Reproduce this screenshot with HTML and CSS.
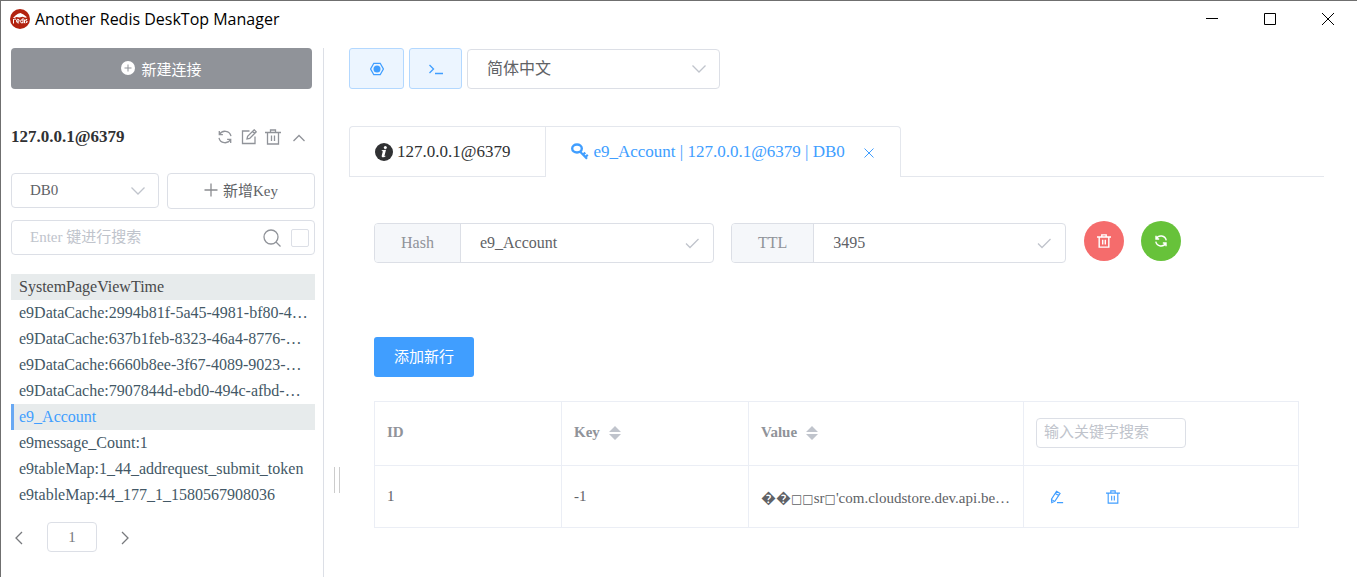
FILE: index.html
```html
<!DOCTYPE html>
<html lang="zh-CN">
<head>
<meta charset="utf-8">
<title>Another Redis DeskTop Manager</title>
<link rel="stylesheet" href="styles.css">
</head>
<body>
<svg class="sprite" aria-hidden="true">
  <symbol id="i-trash" viewBox="0 0 16 16"><path d="M0 3.500h16M5.500 3.500v-2.500h5v2.500M2.500 3.500v11.500h11v-11.500M6.500 6.500v5.500M9.500 6.500v5.500"/></symbol>
  <symbol id="i-refresh" viewBox="0 0 16 16"><path d="M2.300 2v3.700h3.600M13.700 14v-3.700h-3.600M2.500 5.500A6.200 6.200 0 0 1 14 7.200M13.500 10.500A6.200 6.200 0 0 1 2 8.800"/></symbol>
  <symbol id="i-edit" viewBox="0 0 16 16"><path d="M8.500 2h-7v12.500h12.500v-7M6 10l.6-2.700L13.200.8l2 2L8.700 9.400zM11.500 2.500l2 2"/></symbol>
  <symbol id="i-down" viewBox="0 0 16 16"><path d="M1.500 4.500 8 11l6.500-6.500"/></symbol>
  <symbol id="i-up" viewBox="0 0 16 16"><path d="M2.500 12l5.500-5.500 5.500 5.500"/></symbol>
  <symbol id="i-left" viewBox="0 0 16 16"><path d="M11 3 5 9l6 6"/></symbol>
  <symbol id="i-right" viewBox="0 0 16 16"><path d="M5 3l6 6-6 6"/></symbol>
  <symbol id="i-check" viewBox="0 0 16 16"><path d="M2 8.500 6 12.500 14.500 4"/></symbol>
  <symbol id="i-close" viewBox="0 0 16 16"><path d="M3.500 4.500l9 9M12.500 4.500l-9 9"/></symbol>
  <symbol id="i-pen" viewBox="0 0 16 16"><path d="M2 14.500 1.700 10.500 7.500 1.500l4 2.400L5.700 12.700zM6 3.900l4 2.400M1.900 11l3.500 2M8 14.500h7"/></symbol>
</svg>
<div class="window">
  <header class="titlebar">
    <svg class="logo" viewBox="0 0 20 20" aria-hidden="true">
      <circle cx="10" cy="10" r="10" fill="#b2220f"/>
      <path d="M3 9 5.500 6.500 8 4.700 10.500 4l3 1.500 3.500 2.800-1.500.5-3-1-3 .6-3-.4-2 1.100z" fill="#fff"/>
      <path d="M3.500 14.500v-4.500M3.500 11q1-1.300 2.500-.800M6.500 12.200h2.700q0-2-1.300-2-1.400.1-1.400 2t2.600 1.800M13 9v5.200M13 11q-2.500-1-2.500 1.400t2.500 1.200M14.500 10.500v3.700M17.200 10.500q-1.800-.4-1.600.7t1.600 1.300-1.600 1.400" fill="none" stroke="#fff" stroke-width="1"/>
    </svg>
    <h1 class="title">Another Redis DeskTop Manager</h1>
    <div class="window-controls">
      <button class="window-button" aria-label="最小化"><svg viewBox="0 0 12 12"><path d="M0 5.500h12"/></svg></button>
      <button class="window-button" aria-label="最大化"><svg viewBox="0 0 12 12"><path d="M.5.5h11v11H.5z"/></svg></button>
      <button class="window-button" aria-label="关闭"><svg viewBox="0 0 12 12"><path d="M0 0l12 12M12 0 0 12"/></svg></button>
    </div>
  </header>
  <div class="body">
    <aside class="sidebar">
      <button class="new-connection">
        <svg class="icon-plus-circle" viewBox="0 0 14 14" aria-hidden="true"><circle cx="7" cy="7" r="7" fill="#fff"/><path d="M7 3.500v7M3.500 7h7" stroke="#909399"/></svg>
        新建连接
      </button>
      <div class="host">
        <h2 class="host-name">127.0.0.1@6379</h2>
        <div class="host-actions">
          <button class="icon-button" aria-label="刷新"><svg class="icon"><use href="#i-refresh"/></svg></button>
          <button class="icon-button" aria-label="编辑"><svg class="icon"><use href="#i-edit"/></svg></button>
          <button class="icon-button" aria-label="删除"><svg class="icon"><use href="#i-trash"/></svg></button>
          <button class="icon-button host-toggle" aria-label="收起"><svg class="icon"><use href="#i-up"/></svg></button>
        </div>
      </div>
      <div class="db-row">
        <div class="select">
          <select class="select-box" aria-label="DB"><option>DB0</option></select>
          <svg class="icon select-arrow"><use href="#i-down"/></svg>
        </div>
        <button class="new-key"><svg class="icon-plus" viewBox="0 0 14 14"><path d="M7 .5v13M.5 7h13"/></svg>新增Key</button>
      </div>
      <div class="search">
        <input class="search-input" type="text" placeholder="Enter 键进行搜索" aria-label="搜索">
        <svg class="icon-search" viewBox="0 0 18 18"><circle cx="8" cy="8" r="7"/><path d="M13 13l4.500 4.500"/></svg>
        <input class="search-check" type="checkbox" aria-label="精确搜索">
      </div>
      <ul class="keys">
        <li class="key key-hover">SystemPageViewTime</li>
        <li class="key">e9DataCache:2994b81f-5a45-4981-bf80-4…</li>
        <li class="key">e9DataCache:637b1feb-8323-46a4-8776-…</li>
        <li class="key">e9DataCache:6660b8ee-3f67-4089-9023-…</li>
        <li class="key">e9DataCache:7907844d-ebd0-494c-afbd-…</li>
        <li class="key key-selected">e9_Account</li>
        <li class="key">e9message_Count:1</li>
        <li class="key">e9tableMap:1_44_addrequest_submit_token</li>
        <li class="key">e9tableMap:44_177_1_1580567908036</li>
      </ul>
      <nav class="pager">
        <button class="icon-button" aria-label="上一页"><svg class="icon"><use href="#i-left"/></svg></button>
        <input class="page-input" type="text" value="1" aria-label="页码">
        <button class="icon-button" aria-label="下一页"><svg class="icon"><use href="#i-right"/></svg></button>
      </nav>
    </aside>
    <div class="splitter"><span class="grip"></span></div>
    <main class="main">
      <div class="toolbar">
        <button class="tool tool-settings" aria-label="设置">
          <svg class="tool-icon" viewBox="0 0 14 14"><path d="M3.800 1.300h6.400L13.400 7l-3.200 5.700H3.800L.6 7z" fill="none" stroke="#409eff" stroke-width="1.300"/><circle cx="7" cy="7" r="3.500" fill="#409eff"/></svg>
        </button>
        <button class="tool" aria-label="命令行">
          <svg class="tool-icon" viewBox="0 0 14 14"><path d="M.5 3 4.500 7l-4 4M6 11.500h8" fill="none" stroke="#409eff" stroke-width="1.300"/></svg>
        </button>
        <div class="select language">
          <select class="select-box" aria-label="语言"><option>简体中文</option></select>
          <svg class="icon select-arrow"><use href="#i-down"/></svg>
        </div>
      </div>
      <div class="tabs" role="tablist">
        <button class="tab" role="tab">
          <svg class="tab-icon" viewBox="0 0 18 18"><circle cx="9" cy="9" r="9" fill="#303133"/><circle cx="10.300" cy="4.400" r="1.500" fill="#fff"/><path d="M6.300 7.300 11 6.800l-1.500 6q-.2.900 1.800-.3-2 2.400-4 1.700-1-.5-.5-2L7.800 8.500z" fill="#fff"/></svg>
          127.0.0.1@6379
        </button>
        <div class="tab tab-active" role="tab" aria-selected="true">
          <svg class="tab-icon" viewBox="0 0 18 18"><ellipse cx="6" cy="5.500" rx="4.800" ry="4" fill="none" stroke="#409eff" stroke-width="2.400"/><path d="M8.700 8.200l7.300 7.500M12 11.700l2.300-2M14.300 14l2.500-2.200" fill="none" stroke="#409eff" stroke-width="2.200"/></svg>
          <span>e9_Account | 127.0.0.1@6379 | DB0</span>
          <button class="icon-button tab-close" aria-label="关闭标签"><svg class="icon"><use href="#i-close"/></svg></button>
        </div>
      </div>
      <section class="content">
        <div class="key-form">
          <label class="field">
            <span class="field-label">Hash</span>
            <input class="field-input" type="text" value="e9_Account">
            <svg class="icon field-check"><use href="#i-check"/></svg>
          </label>
          <label class="field">
            <span class="field-label">TTL</span>
            <input class="field-input" type="text" value="3495">
            <svg class="icon field-check"><use href="#i-check"/></svg>
          </label>
          <button class="round round-danger" aria-label="删除"><svg class="icon"><use href="#i-trash"/></svg></button>
          <button class="round round-success" aria-label="刷新"><svg class="icon"><use href="#i-refresh"/></svg></button>
        </div>
        <button class="add-row">添加新行</button>
        <table class="table">
          <colgroup><col class="col-narrow"><col class="col-narrow"><col><col></colgroup>
          <thead>
            <tr>
              <th>ID</th>
              <th><span class="sortable">Key <svg class="sort" viewBox="0 0 12 14"><path d="M6 0l6 6H0zM0 8h12l-6 6z"/></svg></span></th>
              <th><span class="sortable">Value <svg class="sort" viewBox="0 0 12 14"><path d="M6 0l6 6H0zM0 8h12l-6 6z"/></svg></span></th>
              <th><input class="filter" type="text" placeholder="输入关键字搜索" aria-label="输入关键字搜索"></th>
            </tr>
          </thead>
          <tbody>
            <tr>
              <td>1</td>
              <td>-1</td>
              <td>��<span class="box">□□</span>sr<span class="box">□</span>'com.cloudstore.dev.api.be…</td>
              <td>
                <div class="row-actions">
                  <button class="icon-button" aria-label="编辑"><svg class="icon"><use href="#i-pen"/></svg></button>
                  <button class="icon-button" aria-label="删除"><svg class="icon"><use href="#i-trash"/></svg></button>
                </div>
              </td>
            </tr>
          </tbody>
        </table>
      </section>
    </main>
  </div>
</div>
</body>
</html>
```
FILE: styles.css
```css
* {
  box-sizing: border-box;
}

body {
  margin: 0;
  background: #fff;
  color: #606266;
  font-family: "Liberation Serif", "Noto Sans CJK SC", serif;
  font-size: 15px;
}

button,
input,
select {
  margin: 0;
  padding: 0;
  border: 0;
  background: none;
  color: inherit;
  font: inherit;
}

button {
  display: inline-flex;
  align-items: center;
  justify-content: center;
  cursor: pointer;
}

input::placeholder {
  color: #c0c4cc;
  opacity: 1;
}

.sprite {
  display: none;
}

.icon {
  display: block;
  width: 16px;
  height: 16px;
  fill: none;
  stroke: currentColor;
  stroke-width: 1.3px;
}

.window {
  display: flex;
  flex-direction: column;
  min-height: 100vh;
  border-top: 1px solid #6f6f6f;
  border-left: 1px solid #6f6f6f;
}

.titlebar {
  display: flex;
  align-items: center;
  height: 36px;
  padding-left: 9px;
  color: #000;
}

.logo {
  width: 20px;
  height: 20px;
}

.title {
  margin: 0 auto 0 5px;
  font: 400 16px/24px "Open Sans", sans-serif;
}

.window-controls {
  display: flex;
  height: 100%;
}

.window-button {
  width: 58px;
}

.window-button svg {
  width: 12px;
  height: 12px;
  fill: none;
  stroke: #000;
}

.body {
  display: flex;
  flex: 1;
  margin-top: 11px;
}

.sidebar {
  flex: 0 0 323px;
  padding: 0 8px 0 10px;
  border-right: 1px solid #dcdfe6;
}

.new-connection {
  width: calc(100% - 3px);
  height: 41px;
  gap: 6px;
  padding-bottom: 1px;
  border-radius: 4px;
  background: #909399;
  color: #fff;
}

.icon-plus-circle {
  width: 14px;
  height: 14px;
}

.host {
  display: flex;
  align-items: center;
  justify-content: space-between;
  height: 84px;
  padding: 12px 8px 0 0;
}

.host-name {
  margin: 0;
  color: #303133;
  font-size: 17px;
  line-height: 20px;
}

.host-actions {
  display: flex;
  gap: 8px;
  color: #909399;
}

.host-toggle {
  margin-left: 2px;
}

.db-row {
  display: grid;
  grid-template-columns: 1fr 1fr;
  gap: 8px;
}

.select {
  position: relative;
}

.select-box {
  width: 100%;
  height: 35px;
  padding: 0 32px 2px 18px;
  border: 1px solid #dcdfe6;
  border-radius: 4px;
  background: #fff;
  appearance: none;
}

.select-arrow {
  position: absolute;
  top: 50%;
  right: 13px;
  color: #c0c4cc;
  transform: translateY(-50%);
  pointer-events: none;
}

.new-key {
  height: 36px;
  gap: 5px;
  padding-bottom: 4px;
  border: 1px solid #dcdfe6;
  border-radius: 4px;
}

.icon-plus {
  width: 14px;
  height: 14px;
  margin-top: 2px;
  stroke: #8a8c90;
  stroke-width: 1.3px;
}

.search {
  display: flex;
  align-items: center;
  height: 35px;
  margin-top: 11px;
  padding: 0 5px 0 18px;
  border: 1px solid #dcdfe6;
  border-radius: 4px;
}

.search-input {
  flex: 1;
  min-width: 0;
}

.icon-search {
  width: 18px;
  height: 18px;
  fill: none;
  stroke: #909399;
  stroke-width: 1.3px;
}

.search-check {
  width: 18px;
  height: 18px;
  margin-left: 10px;
  border: 1px solid #dcdfe6;
  border-radius: 2px;
  appearance: none;
}

.keys {
  margin: 19px 0 14px;
  padding: 0;
  list-style: none;
}

.key {
  overflow: hidden;
  padding-left: 8px;
  color: #435866;
  font-size: 16px;
  line-height: 26px;
  text-overflow: ellipsis;
  white-space: nowrap;
}

.key-hover,
.key-selected {
  background: #e7ebec;
}

.key-hover {
  color: #48494b;
}

.key-selected {
  padding-left: 5px;
  border-left: 3px solid #68a8f3;
  color: #409eff;
}

.pager {
  display: flex;
  align-items: center;
  gap: 20px;
  color: #77797d;
}

.page-input {
  width: 50px;
  height: 30px;
  border: 1px solid #dcdfe6;
  border-radius: 4px;
  text-align: center;
}

.splitter {
  display: flex;
  flex: 0 0 25px;
  align-items: flex-end;
  justify-content: center;
  padding-bottom: 84px;
}

.grip {
  width: 6px;
  height: 26px;
  margin-left: 1px;
  border: solid #ccc;
  border-width: 0 1px;
}

.main {
  flex: 1;
  min-width: 0;
  padding-right: 33px;
}

.toolbar {
  display: flex;
  gap: 5px;
}

.tool {
  width: 53px;
  height: 41px;
  border: 1px solid #b3d8ff;
  border-radius: 3px;
  background: #ecf5ff;
}

.tool-settings {
  width: 55px;
}

.tool-icon {
  width: 14px;
  height: 14px;
}

.language {
  width: 253px;
  padding-top: 1px;
}

.language .select-box {
  height: 40px;
  padding-left: 19px;
  font-size: 16px;
}

.tabs {
  display: flex;
  margin-top: 37px;
  border-bottom: 1px solid #e4e7ed;
}

.tab {
  display: flex;
  align-items: center;
  gap: 4px;
  height: 50px;
  padding: 0 35px 0 25px;
  border-top: 1px solid #e4e7ed;
  border-left: 1px solid #e4e7ed;
  border-top-left-radius: 4px;
  color: #303133;
  font-size: 17px;
}

.tab-active {
  height: 51px;
  margin-bottom: -1px;
  padding: 0 23px 0 25px;
  border-right: 1px solid #e4e7ed;
  border-radius: 0 4px 0 0;
  background: #fff;
  color: #409eff;
}

.tab-icon {
  width: 18px;
  height: 18px;
}

.tab-close {
  margin-left: 12px;
}

.tab-close .icon {
  stroke-width: 1px;
}

.content {
  padding: 44px 25px 0;
}

.key-form {
  display: flex;
  align-items: flex-start;
  gap: 17px;
}

.field {
  display: flex;
  align-items: center;
  width: 340px;
  height: 40px;
  margin-top: 2px;
  overflow: hidden;
  border: 1px solid #dcdfe6;
  border-radius: 4px;
  font-size: 16px;
}

.field + .field {
  width: 335px;
}

.field-label {
  align-self: stretch;
  padding: 0 26px;
  border-right: 1px solid #dcdfe6;
  background: #f5f7fa;
  color: #909399;
  line-height: 38px;
}

.field-input {
  flex: 1;
  min-width: 0;
  padding-left: 19px;
}

.field-check {
  margin-right: 13px;
  color: #c0c4cc;
}

.round {
  width: 40px;
  height: 40px;
  border-radius: 50%;
  color: #fff;
}

.round-danger {
  margin-left: 1px;
  background: #f56c6c;
}

.round-success {
  background: #67c23a;
}

.round .icon,
.row-actions .icon {
  width: 14px;
  height: 14px;
}

.round .icon {
  stroke-width: 1.6px;
}

.add-row {
  height: 40px;
  margin-top: 74px;
  padding: 0 20px 3px;
  border-radius: 3px;
  background: #409eff;
  color: #fff;
}

.table {
  width: 100%;
  margin-top: 24px;
  border: 1px solid #ebeef5;
  border-collapse: collapse;
  table-layout: fixed;
}

.col-narrow {
  width: 187px;
}

.table th,
.table td {
  overflow: hidden;
  padding: 0 12px;
  border: 1px solid #ebeef5;
  text-align: left;
  white-space: nowrap;
}

.table th {
  height: 64px;
  padding-bottom: 2px;
  color: #909399;
}

.table td {
  height: 62px;
}

.sortable {
  display: flex;
  align-items: center;
  gap: 9px;
}

.sort {
  width: 12px;
  height: 14px;
  fill: #c0c4cc;
}

.filter {
  width: 150px;
  height: 30px;
  padding: 0 7px;
  border: 1px solid #dcdfe6;
  border-radius: 4px;
  font-weight: 400;
}

.box {
  font-family: "DejaVu Sans", sans-serif;
  font-size: 12px;
  line-height: 16px;
}

.row-actions {
  display: flex;
  gap: 42px;
  padding-left: 14px;
  color: #409eff;
}
```
